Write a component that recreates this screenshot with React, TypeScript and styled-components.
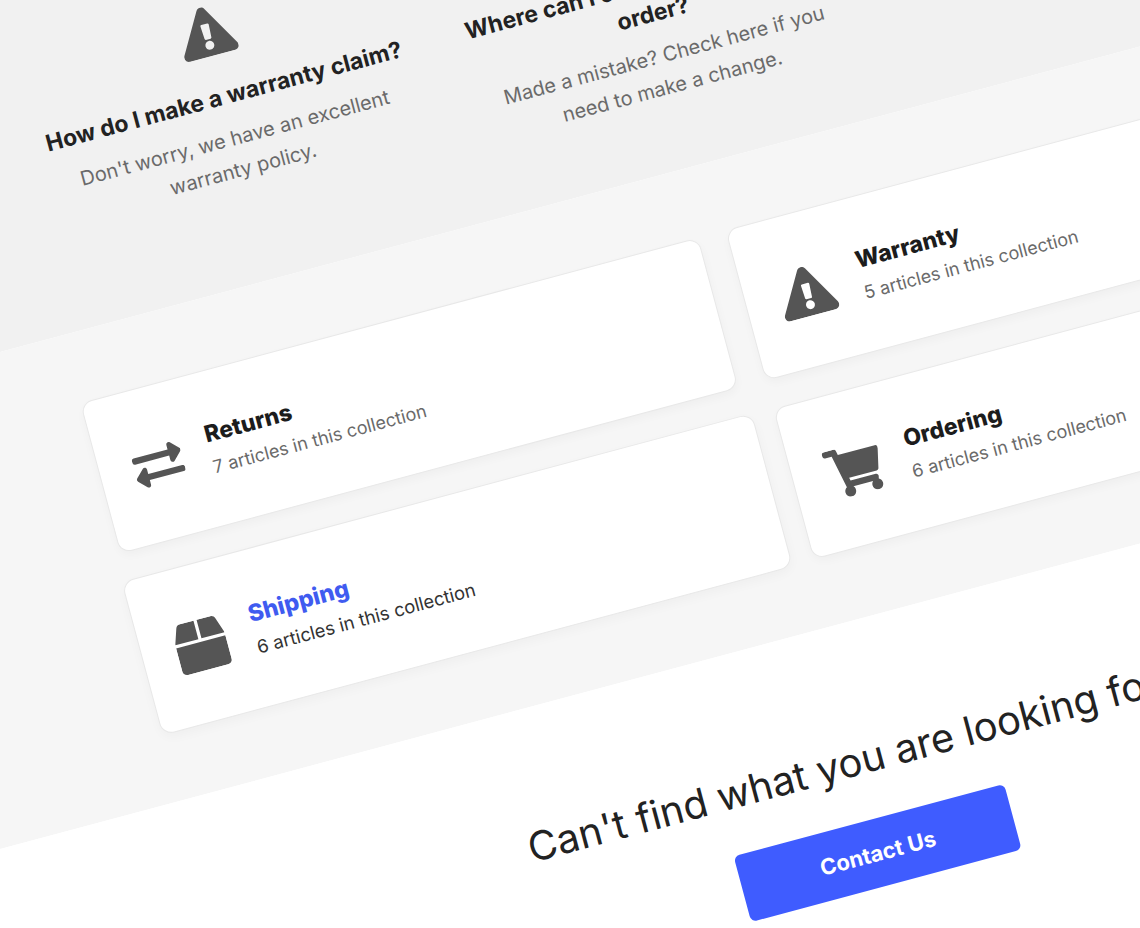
import React from "react";
import styled, { createGlobalStyle, css } from "styled-components";
import { FaBox, FaExchangeAlt, FaExclamationTriangle, FaPencilAlt, FaShoppingCart } from "react-icons/fa";

const GlobalStyle = createGlobalStyle`
  *, *::before, *::after { box-sizing: border-box; }
  body {
    margin: 0;
    background: #fff;
    color: #222;
    font-family: Inter, "Liberation Sans", sans-serif;
  }
  h2, h3, p { margin: 0; }
`;

const Viewport = styled.div`
  height: 100vh;
  overflow: hidden;
`;

/* The page is wider than the window so that its tilted edges stay out of view. */
const TiltedPage = styled.div`
  width: 156vw;
  margin-left: -23vw;
  transform: rotate(-15deg);
  transform-origin: 23vw 0;
`;

const Container = styled.div`
  width: 100%;
  max-width: 1308px;
  margin: 0 auto;
`;

const Hero = styled.section`
  min-height: 340px;
  padding-top: 59px;
  background: #f1f1f1;
`;

const Questions = styled.div`
  display: grid;
  grid-template-columns: repeat(3, 1fr);
`;

const Question = styled.article`
  display: flex;
  flex-direction: column;
  align-items: center;
  padding: 0 32px;
  text-align: center;
`;

const Icon = styled.span<{ $wide?: boolean }>`
  display: flex;
  flex: none;
  color: #555;

  svg {
    flex: none;
    width: ${({ $wide }) => ($wide ? 56 : 50)}px;
    height: 50px;
  }
`;

const QuestionTitle = styled.h3`
  margin-top: 27px;
  font-size: 23px;
  line-height: 31px;
  font-weight: 700;
  white-space: nowrap;
`;

const QuestionText = styled.p`
  margin-top: 11px;
  font-size: 20px;
  line-height: 32px;
  font-weight: 400;
  color: #6a6a6a;
  white-space: nowrap;
`;

const Collections = styled.section`
  padding: 70px 0 69px;
  background: #f6f6f6;
`;

const CardGrid = styled.div`
  display: grid;
  grid-template-columns: repeat(2, 1fr);
  gap: 29px 28px;
`;

const CardTitle = styled.h3`
  font-size: 23px;
  line-height: 32px;
  font-weight: 800;
  color: #1c1c1c;
`;

const CardText = styled.p`
  margin-top: 2px;
  font-size: 18px;
  line-height: 32px;
  font-weight: 400;
  color: #6a6a6a;
`;

const Card = styled.a<{ $active?: boolean }>`
  display: flex;
  align-items: center;
  gap: 27px;
  height: 156px;
  padding: 4px 34px 0;
  border: 1px solid #e8e8e8;
  border-radius: 12px;
  background: #fff;
  box-shadow: 0 4px 10px rgba(0, 0, 0, 0.03);
  text-decoration: none;
  ${({ $active }) =>
    $active &&
    css`
      transform: scale(1.02);
      ${CardTitle} { color: #3f5bf0; }
      ${CardText} { color: #333; }
    `}
`;

const Contact = styled.section`
  display: flex;
  flex-direction: column;
  align-items: center;
  padding: 109px 0 140px;
  background: #fff;
`;

const ContactTitle = styled.h2`
  font-size: 40px;
  line-height: 56px;
  font-weight: 400;
`;

const ContactButton = styled.button`
  width: 280px;
  height: 68px;
  margin-top: 32px;
  border: 0;
  border-radius: 6px;
  background: #3f5cff;
  color: #fff;
  font: 700 22px/32px Inter, "Liberation Sans", sans-serif;
`;

const questions = [
  {
    icon: <FaExclamationTriangle />,
    wide: true,
    title: ["How do I make a warranty claim?"],
    text: ["Don't worry, we have an excellent", "warranty policy."],
  },
  {
    icon: <FaPencilAlt />,
    title: ["Where can I change or cancel my", "order?"],
    text: ["Made a mistake? Check here if you", "need to make a change."],
  },
];

const collections = [
  { icon: <FaExchangeAlt />, title: "Returns", count: 7 },
  { icon: <FaExclamationTriangle />, wide: true, title: "Warranty", count: 5 },
  { icon: <FaBox />, title: "Shipping", count: 6, active: true },
  { icon: <FaShoppingCart />, wide: true, title: "Ordering", count: 6 },
];

const Lines = ({ lines }: { lines: string[] }) => (
  <>
    {lines.map((line, i) => (
      <React.Fragment key={line}>
        {i > 0 && <br />}
        {line}
      </React.Fragment>
    ))}
  </>
);

export default function App() {
  return (
    <>
      <GlobalStyle />
      <Viewport>
        <TiltedPage>
          <Hero>
            <Container>
              <Questions>
                {questions.map((q) => (
                  <Question key={q.title[0]}>
                    <Icon aria-hidden $wide={q.wide}>{q.icon}</Icon>
                    <QuestionTitle><Lines lines={q.title} /></QuestionTitle>
                    <QuestionText><Lines lines={q.text} /></QuestionText>
                  </Question>
                ))}
              </Questions>
            </Container>
          </Hero>
          <Collections>
            <Container>
              <CardGrid>
                {collections.map((c) => (
                  <Card key={c.title} href="#" $active={c.active}>
                    <Icon aria-hidden $wide={c.wide}>{c.icon}</Icon>
                    <div>
                      <CardTitle>{c.title}</CardTitle>
                      <CardText>{c.count} articles in this collection</CardText>
                    </div>
                  </Card>
                ))}
              </CardGrid>
            </Container>
          </Collections>
          <Contact>
            <ContactTitle>Can't find what you are looking for?</ContactTitle>
            <ContactButton type="button">Contact Us</ContactButton>
          </Contact>
        </TiltedPage>
      </Viewport>
    </>
  );
}
